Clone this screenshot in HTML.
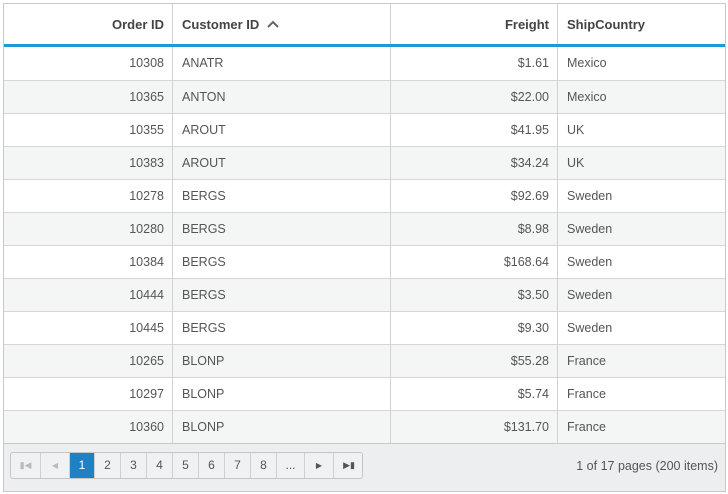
<!DOCTYPE html>
<html><head><style>
*{margin:0;padding:0;box-sizing:border-box}
body{width:728px;height:494px;background:#fff;font-family:"Liberation Sans",sans-serif;font-size:12.5px;color:#555;position:relative;overflow:hidden}
.g{position:absolute;left:3px;top:3px;width:723px;height:489px;border:1px solid #c8c8c8;}
.hd{position:absolute;left:0;top:0;width:721px;height:41px;}
.hc{position:absolute;top:0;height:41px;line-height:41px;font-weight:bold;color:#444;font-size:13px}
.blue{position:absolute;left:0;top:40px;width:721px;height:3px;background:#1a9bd7}
.row{position:absolute;left:0;width:721px;height:33px;border-top:1px solid #d6d6d6;line-height:32px}
.alt{background:#f4f5f5}
.c{position:absolute;top:0;height:32px}
.vl{position:absolute;width:1px;background:#d2d2d2}
.pg{position:absolute;left:0;top:439px;width:721px;height:48px;background:#eceef0;border-top:1px solid #c8c8c8}
.pb{position:absolute;top:8px;height:27px;border:1px solid #c6c6c6;border-radius:3px;background:#f0f1f2;overflow:hidden}
.b{position:absolute;top:0;height:25px;line-height:25px;text-align:center;border-right:1px solid #d0d0d0;color:#555;font-size:12px}
.on{background:#1e81c6;color:#fff}
</style></head><body>
<div class="g">
<div class="hd">
<div class="hc" style="left:0;width:160px;text-align:right">Order ID</div>
<div class="hc" style="left:178px">Customer ID <svg width="12" height="10" style="margin-left:4px;vertical-align:0"><path d="M1 8 L6 3 L11 8" stroke="#666" stroke-width="2" fill="none"/></svg></div>
<div class="hc" style="left:386px;width:159px;text-align:right">Freight</div>
<div class="hc" style="left:563px">ShipCountry</div>
</div>
<div class="vl" style="left:168px;top:0;height:40px"></div>
<div class="vl" style="left:386px;top:0;height:40px"></div>
<div class="vl" style="left:553px;top:0;height:40px"></div>
<div class="blue"></div>
<div id="rows"></div>
<div class="vl" style="left:168px;top:43px;height:396px"></div>
<div class="vl" style="left:386px;top:43px;height:396px"></div>
<div class="vl" style="left:553px;top:43px;height:396px"></div>
<div class="pg">
<div class="pb" style="left:6px;width:353px">
<div class="b" style="left:0;width:30px;color:#bbb;font-size:9px">&#9646;&#9664;</div>
<div class="b" style="left:30px;width:29px;color:#bbb;font-size:8px">&#9664;</div>
<div class="b on" style="left:59px;width:25px">1</div>
<div class="b" style="left:84px;width:26px">2</div>
<div class="b" style="left:110px;width:26px">3</div>
<div class="b" style="left:136px;width:26px">4</div>
<div class="b" style="left:162px;width:26px">5</div>
<div class="b" style="left:188px;width:26px">6</div>
<div class="b" style="left:214px;width:26px">7</div>
<div class="b" style="left:240px;width:26px">8</div>
<div class="b" style="left:266px;width:28px">...</div>
<div class="b" style="left:294px;width:29px;font-size:8px">&#9654;</div>
<div class="b" style="left:323px;width:30px;border-right:none;font-size:9px">&#9654;&#9646;</div>
</div>
<div style="position:absolute;right:7px;top:0;line-height:44px;font-size:12.5px;color:#555">1 of 17 pages (200 items)</div>
</div>
</div>
<script>
var d=[["10308","ANATR","$1.61","Mexico"],["10365","ANTON","$22.00","Mexico"],["10355","AROUT","$41.95","UK"],["10383","AROUT","$34.24","UK"],["10278","BERGS","$92.69","Sweden"],["10280","BERGS","$8.98","Sweden"],["10384","BERGS","$168.64","Sweden"],["10444","BERGS","$3.50","Sweden"],["10445","BERGS","$9.30","Sweden"],["10265","BLONP","$55.28","France"],["10297","BLONP","$5.74","France"],["10360","BLONP","$131.70","France"]];
var h="";d.forEach(function(r,i){h+='<div class="row'+(i%2?' alt':'')+'" style="top:'+(i==0?43:43+i*33)+'px;'+(i==0?'border-top:none;':'')+'"><div class="c" style="left:0;width:160px;text-align:right">'+r[0]+'</div><div class="c" style="left:178px">'+r[1]+'</div><div class="c" style="left:386px;width:159px;text-align:right">'+r[2]+'</div><div class="c" style="left:563px">'+r[3]+'</div></div>';});
document.getElementById("rows").outerHTML=h;
</script>
</body></html>
